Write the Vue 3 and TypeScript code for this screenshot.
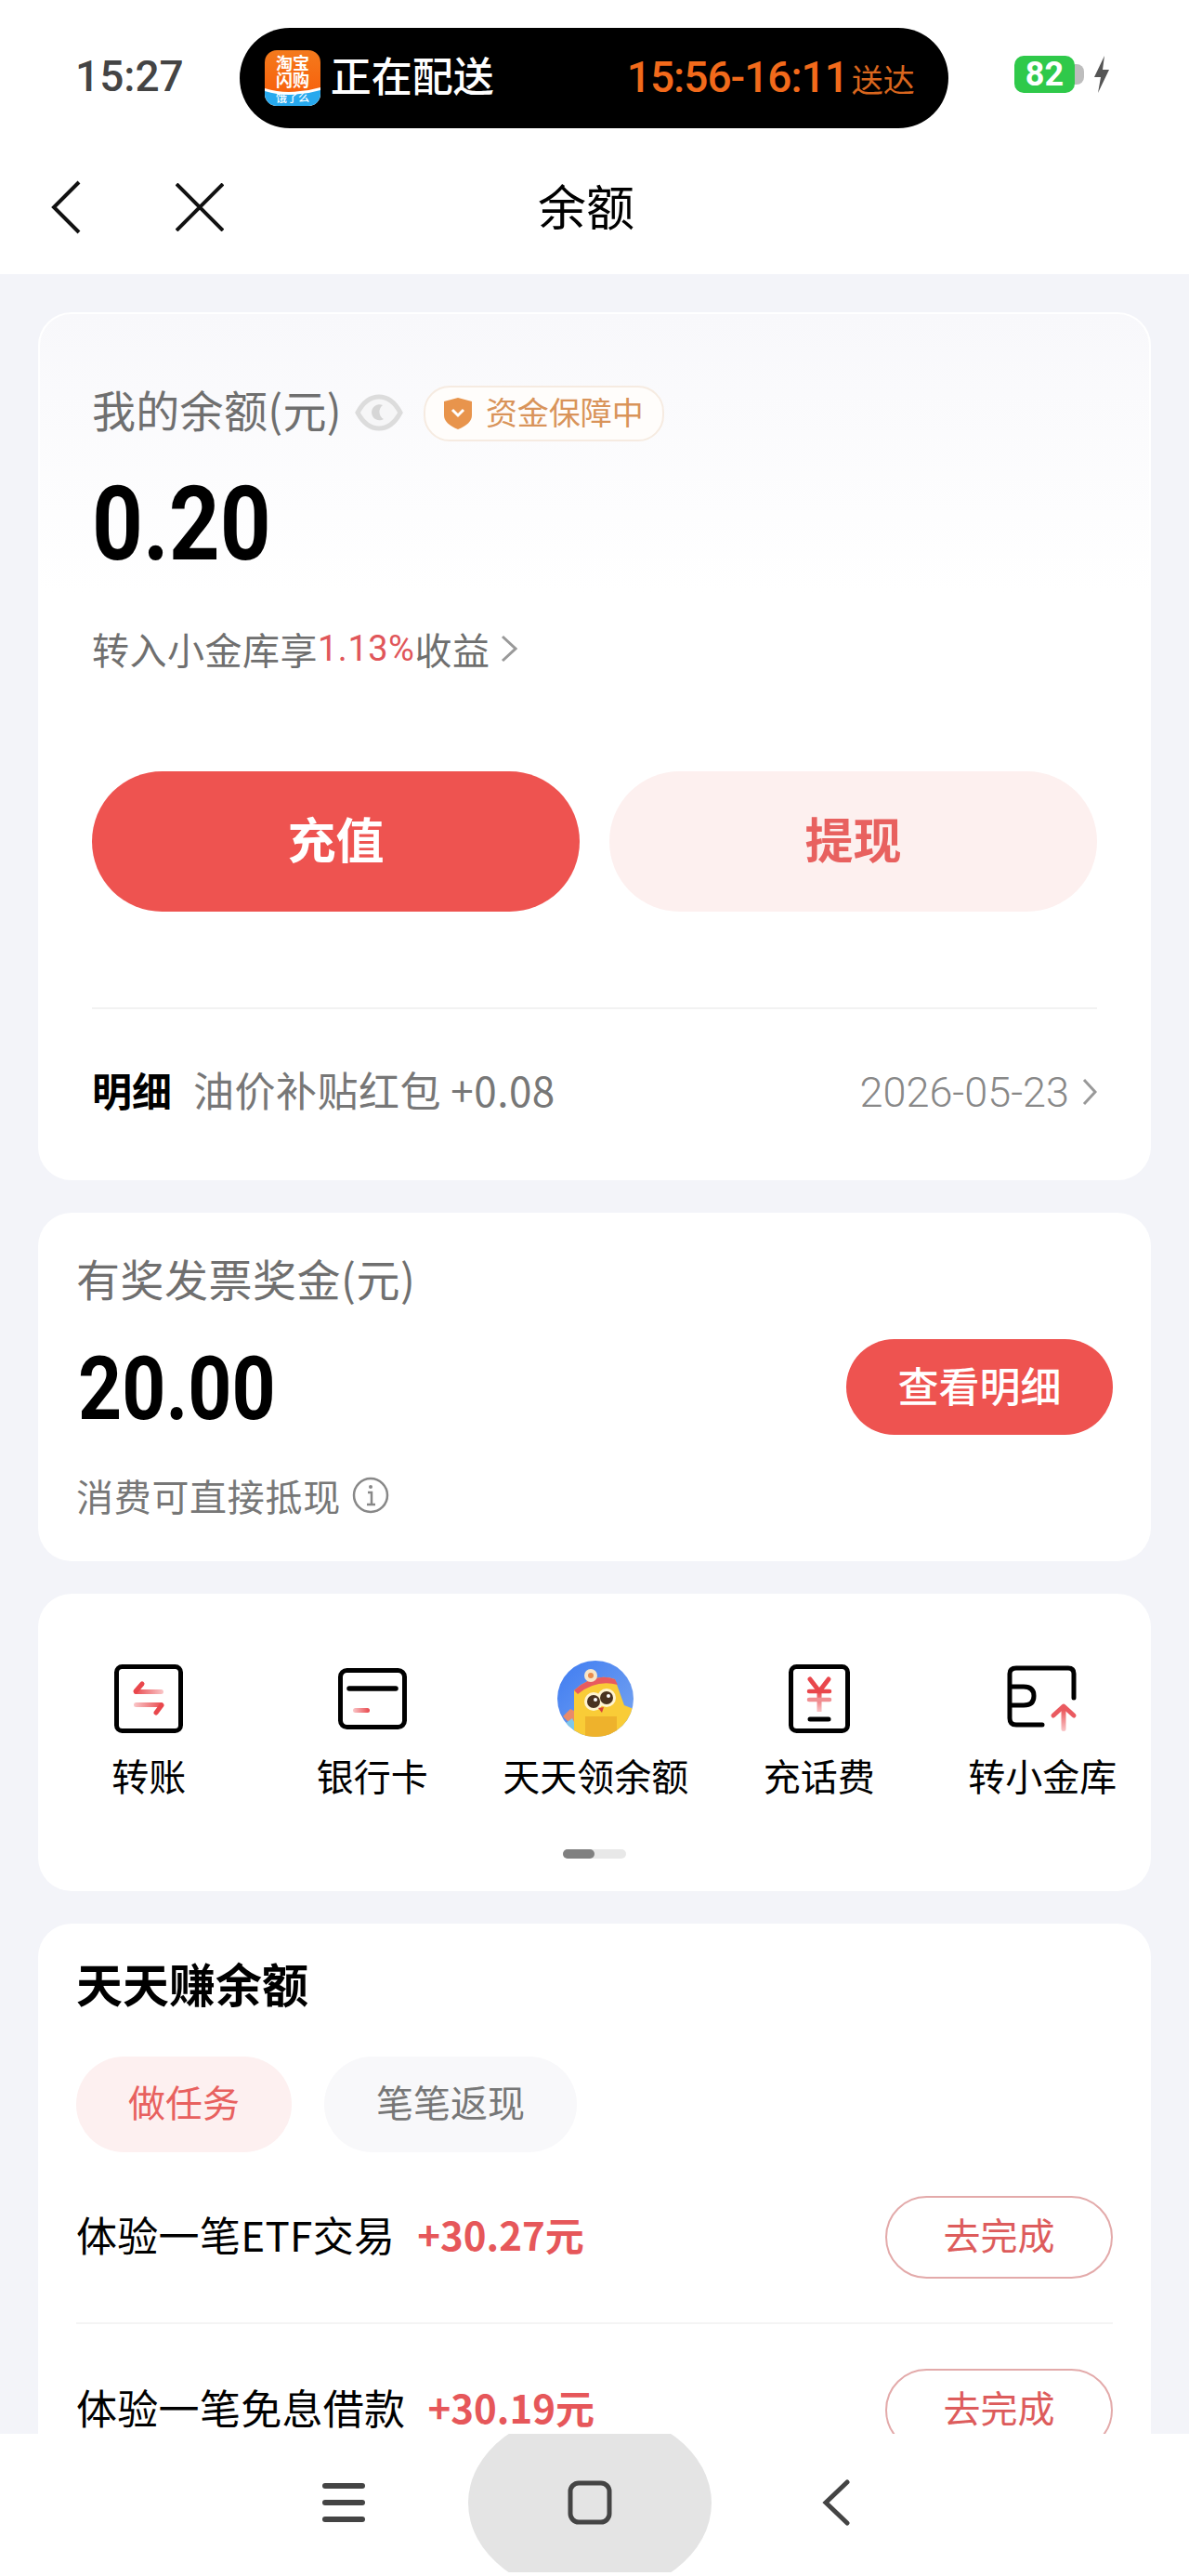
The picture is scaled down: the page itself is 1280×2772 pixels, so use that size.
<script setup lang="ts">
const shortcuts = [
  { key: 'transfer', label: '转账' },
  { key: 'card', label: '银行卡' },
  { key: 'mascot', label: '天天领余额' },
  { key: 'phone', label: '充话费' },
  { key: 'vault', label: '转小金库' },
]

const tasks = [
  { name: '体验一笔ETF交易', reward: '+30.27元' },
  { name: '体验一笔免息借款', reward: '+30.19元' },
]
</script>

<template>
  <div class="page">
    <!-- 状态栏 -->
    <div class="status">
      <span class="clock">15:27</span>
      <div class="island">
        <svg class="app-icon" viewBox="0 0 60 60" width="60" height="60">
          <defs>
            <linearGradient id="appOrange" x1="0" y1="0" x2="0" y2="1">
              <stop offset="0" stop-color="#f47a1c" />
              <stop offset="1" stop-color="#f85a08" />
            </linearGradient>
            <clipPath id="appClip"><rect width="60" height="60" rx="13" /></clipPath>
          </defs>
          <g clip-path="url(#appClip)">
            <rect width="60" height="60" fill="url(#appOrange)" />
            <path d="M0 41 Q20 47 38 44 Q50 43 60 40 V60 H0 Z" fill="#fff" />
            <path d="M0 44 Q20 50 38 47 Q50 46 60 43 V60 H0 Z" fill="#27a9ee" />
            <text x="30" y="21" class="app-t1">淘宝</text>
            <text x="30" y="39" class="app-t1">闪购</text>
            <text x="30" y="56" class="app-t2">饿了么</text>
          </g>
        </svg>
        <span class="island-title">正在配送</span>
        <span class="island-time">15:56-16:11</span>
        <span class="island-note">送达</span>
      </div>
      <div class="battery">
        <div class="battery-body">82</div>
        <div class="battery-tip"></div>
        <svg width="18" height="40" viewBox="0 0 18 40"><path d="M12 0 L1 23 H8 L5 40 L17 15 H10 Z" fill="#555" /></svg>
      </div>
    </div>

    <!-- 导航 -->
    <div class="nav">
      <svg class="nav-back" width="34" height="58" viewBox="0 0 34 58" fill="none" stroke="#111" stroke-width="4">
        <path d="M31 2 L4 29 L31 56" />
      </svg>
      <svg class="nav-close" width="52" height="52" viewBox="0 0 52 52" fill="none" stroke="#111" stroke-width="4">
        <path d="M1 1 L51 51 M51 1 L1 51" />
      </svg>
      <div class="nav-title">余额</div>
    </div>

    <div class="scroll">
      <!-- 余额 -->
      <section class="card balance">
        <div class="balance-head">
          <span class="muted-lg">我的余额(元)</span>
          <svg class="eye" width="52" height="40" viewBox="0 0 52 40" fill="none">
            <path d="M3 20 Q12 3 26 3 Q40 3 49 20 Q40 37 26 37 Q12 37 3 20 Z" fill="#f6f6f7" stroke="#dcdcdc" stroke-width="5" />
            <path d="M30 12 A8.5 8.5 0 1 0 31 27 A9 9 0 0 1 30 12 Z" fill="#d6d6d6" />
          </svg>
          <div class="safe-badge">
            <svg width="30" height="34" viewBox="0 0 30 34">
              <path d="M15 0 L30 4 V19 Q30 28 15 34 Q0 28 0 19 V4 Z" fill="#e8944c" />
              <path d="M9 13 L15 19 L21 13" fill="none" stroke="#fff" stroke-width="3" />
            </svg>
            <span class="safe-text">资金保障中</span>
          </div>
        </div>
        <div class="amount amount-lg">0.20</div>
        <div class="promo">
          转入小金库享<span class="rate">1.13%</span>收益
          <svg class="chev" width="18" height="30" viewBox="0 0 18 30" fill="none" stroke="#999" stroke-width="3"><path d="M2 2 L16 15 L2 28" /></svg>
        </div>
        <div class="actions">
          <div class="btn-main">充值</div>
          <div class="btn-soft">提现</div>
        </div>
        <div class="divider"></div>
        <div class="detail">
          <b class="detail-tag">明细</b>
          <span class="detail-text">油价补贴红包 +0.08</span>
          <span class="detail-date">2026-05-23</span>
          <svg width="16" height="30" viewBox="0 0 16 30" fill="none" stroke="#999" stroke-width="3"><path d="M2 2 L14 15 L2 28" /></svg>
        </div>
      </section>

      <!-- 发票奖金 -->
      <section class="card invoice">
        <div class="invoice-label">有奖发票奖金(元)</div>
        <div class="invoice-row">
          <div class="amount amount-md">20.00</div>
          <div class="btn-detail">查看明细</div>
        </div>
        <div class="invoice-note">
          <span class="note-text">消费可直接抵现</span>
          <svg width="40" height="40" viewBox="0 0 40 40" fill="none">
            <circle cx="20" cy="20" r="18" stroke="#888" stroke-width="2.5" />
            <circle cx="20" cy="11" r="2" fill="#888" />
            <path d="M17 17 H21 V30 M16 30 H25" stroke="#888" stroke-width="2.5" />
          </svg>
        </div>
      </section>

      <!-- 快捷入口 -->
      <section class="card tools">
        <svg width="0" height="0" class="defs">
          <defs>
            <linearGradient id="fadeRight" x1="0" y1="0" x2="1" y2="0">
              <stop offset="0" stop-color="#e9474c" />
              <stop offset="1" stop-color="#f9c6c8" />
            </linearGradient>
            <linearGradient id="fadeLeft" x1="0" y1="0" x2="1" y2="0">
              <stop offset="0" stop-color="#f9c6c8" />
              <stop offset="1" stop-color="#e9474c" />
            </linearGradient>
            <linearGradient id="fadeDown" x1="0" y1="0" x2="0" y2="1">
              <stop offset="0" stop-color="#e9474c" />
              <stop offset="1" stop-color="#f9c6c8" />
            </linearGradient>
          </defs>
        </svg>
        <div class="tool-grid">
          <div v-for="item in shortcuts" :key="item.key" class="tool">
            <div class="tool-icon">
              <svg v-if="item.key === 'transfer'" width="74" height="74" viewBox="0 0 74 74" fill="none">
                <rect x="2.5" y="2.5" width="69" height="69" rx="6" stroke="#000" stroke-width="5" />
                <rect x="21" y="27" width="32" height="5" rx="2.5" fill="url(#fadeRight)" />
                <path d="M23 29 L30 21" stroke="#e9474c" stroke-width="5" stroke-linecap="round" />
                <rect x="21" y="41" width="32" height="5" rx="2.5" fill="url(#fadeLeft)" />
                <path d="M51 44 L45 52" stroke="#e9474c" stroke-width="5" stroke-linecap="round" />
              </svg>
              <svg v-else-if="item.key === 'card'" width="74" height="66" viewBox="0 0 74 66" fill="none">
                <rect x="2.5" y="2.5" width="69" height="61" rx="7" stroke="#000" stroke-width="5" />
                <path d="M12 22 H62" stroke="#000" stroke-width="5.5" stroke-linecap="round" />
                <rect x="16" y="43" width="18" height="5" rx="2.5" fill="url(#fadeLeft)" />
              </svg>
              <svg v-else-if="item.key === 'mascot'" width="82" height="82" viewBox="0 0 82 82">
                <defs>
                  <linearGradient id="mascotSky" x1="0" y1="0" x2="1" y2="1">
                    <stop offset="0" stop-color="#3f7cf2" />
                    <stop offset="1" stop-color="#7aa6ef" />
                  </linearGradient>
                  <clipPath id="mascotClip"><circle cx="41" cy="41" r="41" /></clipPath>
                </defs>
                <g clip-path="url(#mascotClip)">
                  <rect width="82" height="82" fill="url(#mascotSky)" />
                  <path d="M6 60 L14 52 L22 56 L16 70 Z" fill="#e98a6a" />
                  <path d="M8 68 L16 62 L22 74 L14 78 Z" fill="#7fc7ea" />
                  <path d="M18 32 Q40 12 62 20 L72 48 L82 52 V82 H18 Z" fill="#f9cc37" />
                  <path d="M18 32 Q40 12 62 20 L65 26 Q42 20 22 36 Z" fill="#e85b5f" />
                  <circle cx="36" cy="16" r="7" fill="#f7e6c8" />
                  <circle cx="36" cy="16" r="3" fill="#e88a4a" />
                  <path d="M30 60 H64 V82 H30 Z" fill="#eeb22c" />
                  <circle cx="39" cy="44" r="10" fill="#fff4d0" />
                  <circle cx="53" cy="40" r="10" fill="#fff4d0" />
                  <circle cx="39" cy="44" r="7" fill="#4a3320" />
                  <circle cx="53" cy="40" r="7" fill="#4a3320" />
                  <circle cx="41" cy="42" r="2" fill="#fff" />
                  <circle cx="55" cy="38" r="2" fill="#fff" />
                  <path d="M44 51 L50 50 L48 56 Z" fill="#d8413a" />
                </g>
              </svg>
              <svg v-else-if="item.key === 'phone'" width="66" height="74" viewBox="0 0 66 74" fill="none">
                <rect x="2.5" y="2.5" width="61" height="69" rx="6" stroke="#000" stroke-width="5" />
                <path d="M23 16 L33 29 L43 16" stroke="#e9474c" stroke-width="5" stroke-linecap="round" />
                <rect x="30.5" y="29" width="5" height="22" fill="url(#fadeDown)" />
                <path d="M22 29 H44" stroke="#e9474c" stroke-width="4.5" stroke-linecap="round" />
                <path d="M22 38 H44" stroke="#f08f92" stroke-width="4.5" stroke-linecap="round" />
                <path d="M23 59 H43" stroke="#000" stroke-width="5" stroke-linecap="round" />
              </svg>
              <svg v-else width="76" height="72" viewBox="0 0 76 72" fill="none">
                <path d="M38 64 H10 Q3 64 3 57 V9 Q3 3 10 3 H66 Q72 3 72 9 V35" stroke="#000" stroke-width="5" stroke-linecap="round" />
                <path d="M3 23 H18 Q29 23 29 33 Q29 43 18 43 H3" stroke="#000" stroke-width="5" />
                <rect x="58.5" y="44" width="5" height="27" rx="2.5" fill="url(#fadeDown)" />
                <path d="M50 54 L61 44 L72 54" stroke="#ea5a60" stroke-width="5" stroke-linecap="round" stroke-linejoin="round" />
              </svg>
            </div>
            <div class="tool-label">{{ item.label }}</div>
          </div>
        </div>
        <div class="pager"><span></span></div>
      </section>

      <!-- 天天赚余额 -->
      <section class="card earn">
        <div class="earn-title">天天赚余额</div>
        <div class="tabs">
          <div class="tab tab-on">做任务</div>
          <div class="tab">笔笔返现</div>
        </div>
        <div v-for="task in tasks" :key="task.name" class="task">
          <span class="task-name">{{ task.name }}</span>
          <span class="task-reward">{{ task.reward }}</span>
          <div class="task-btn">去完成</div>
        </div>
      </section>
    </div>

    <!-- 系统导航 -->
    <div class="sysbar">
      <svg width="46" height="42" viewBox="0 0 46 42" fill="#444">
        <rect width="46" height="6" y="0" rx="3" /><rect width="46" height="6" y="18" rx="3" /><rect width="46" height="6" y="36" rx="3" />
      </svg>
      <div class="home-pill">
        <svg width="48" height="48" viewBox="0 0 48 48" fill="none" stroke="#444" stroke-width="5"><rect x="3" y="3" width="42" height="42" rx="9" /></svg>
      </div>
      <svg width="30" height="50" viewBox="0 0 30 50" fill="none" stroke="#444" stroke-width="5" stroke-linecap="round"><path d="M27 3 L4 25 L27 47" /></svg>
    </div>
  </div>
</template>

<style scoped>
.page {
  width: 1280px;
  height: 2772px;
  overflow: hidden;
  display: flex;
  flex-direction: column;
  background: #f3f4f9;
  font-family: "Noto Sans CJK SC", "Noto Sans", sans-serif;
  color: #000;
}

/* 状态栏 */
.status {
  height: 167px;
  flex: none;
  background: #fff;
  display: flex;
  align-items: flex-start;
  padding: 30px 85px 0 81px;
  box-sizing: border-box;
}
.clock {
  width: 177px;
  margin-top: 22px;
  font: 500 46px/60px Roboto, sans-serif;
  color: #444;
}
.island {
  width: 764px;
  height: 108px;
  background: #000;
  border-radius: 54px;
  display: flex;
  align-items: center;
  padding-left: 27px;
  box-sizing: border-box;
}
.app-icon {
  flex: none;
}
.app-t1 {
  font: 700 18px "Noto Sans CJK SC", sans-serif;
  fill: #fff;
  text-anchor: middle;
}
.app-t2 {
  font: 500 12px "Noto Sans CJK SC", sans-serif;
  fill: #fff;
  text-anchor: middle;
}
.island-title {
  margin-left: 11px;
  margin-bottom: 8px;
  width: 319px;
  font-size: 44px;
  font-weight: 500;
  color: #fff;
}
.island-time {
  margin-bottom: 2px;
  font: 500 46px Roboto, sans-serif;
  color: #f26a1b;
  letter-spacing: -1px;
}
.island-note {
  margin-left: 4px;
  font-size: 34px;
  color: #d9661e;
}
.battery {
  margin-left: 71px;
  margin-top: 30px;
  display: flex;
  align-items: center;
}
.battery-body {
  width: 65px;
  height: 40px;
  border-radius: 10px;
  background: #2fc94a;
  color: #fff;
  font: 700 36px/40px Roboto, sans-serif;
  text-align: center;
}
.battery-tip {
  width: 10px;
  height: 22px;
  background: #bdbdbd;
  border-radius: 0 8px 8px 0;
  margin-right: 10px;
}

/* 导航 */
.nav {
  height: 128px;
  flex: none;
  box-sizing: border-box;
  padding: 0 0 16px 54px;
  background: #fff;
  display: flex;
  align-items: center;
}
.nav-close {
  margin-left: 101px;
}
.nav-title {
  margin-left: 338px;
  padding-bottom: 6px;
  font-size: 52px;
  font-weight: 400;
}

.scroll {
  flex: 1;
  min-height: 0;
  overflow: hidden;
  padding: 41px 41px 0;
}
.card {
  background: #fff;
  border-radius: 36px;
  margin-bottom: 35px;
}

/* 余额卡片 */
.balance {
  padding: 76px 56px 0;
  background: linear-gradient(#f8f8fb, #fff 300px);
  border: 2px solid #fff;
  box-sizing: border-box;
  height: 934px;
}
.balance-head {
  height: 60px;
  display: flex;
  align-items: center;
}
.muted-lg {
  padding-bottom: 8px;
  font-size: 47px;
  line-height: 60px;
  letter-spacing: 0.3px;
  color: #6f6f6f;
}
.eye {
  margin-left: 14px;
}
.safe-badge {
  margin-left: 22px;
  height: 56px;
  margin-top: 2px;
  padding: 0 20px;
  display: flex;
  align-items: center;
  gap: 15px;
  background: #fffdfb;
  border: 2px solid #f6ebe1;
  border-radius: 28px;
  font-size: 34px;
  color: #d9945a;
}
.safe-text {
  padding-bottom: 6px;
}
.amount {
  font-family: Roboto, sans-serif;
  font-weight: 700;
  color: #000;
  transform-origin: left center;
}
.amount-lg {
  margin-top: 34px;
  font-size: 112px;
  line-height: 112px;
  transform: scaleX(0.855);
}
.promo {
  margin-top: 52px;
  height: 56px;
  box-sizing: border-box;
  padding-bottom: 5px;
  display: flex;
  align-items: center;
  font-size: 40px;
  letter-spacing: 0.5px;
  color: #6f6f6f;
}
.rate {
  color: #e0565a;
  font-family: Roboto, sans-serif;
  font-size: 38px;
}
.chev {
  margin-left: 12px;
}
.actions {
  margin-top: 102px;
  display: grid;
  grid-template-columns: 1fr 1fr;
  gap: 32px;
}
.btn-main,
.btn-soft {
  height: 151px;
  box-sizing: border-box;
  padding-bottom: 8px;
  border-radius: 76px;
  display: flex;
  align-items: center;
  justify-content: center;
  font-size: 52px;
  font-weight: 700;
}
.btn-main {
  background: #ee5350;
  color: #fff;
}
.btn-soft {
  background: #fdf0ef;
  color: #e8615f;
}
.divider {
  margin-top: 103px;
  height: 2px;
  background: #f2f2f2;
}
.detail {
  margin-top: 59px;
  height: 60px;
  box-sizing: border-box;
  display: flex;
  align-items: center;
  font-size: 43px;
}
.detail-tag {
  padding-bottom: 7px;
  font-weight: 700;
}
.detail-text {
  margin-left: 23px;
  padding-bottom: 7px;
  font-size: 44px;
  letter-spacing: 0.5px;
  color: #777;
  flex: 1;
}
.detail-date {
  margin-right: 14px;
  font-family: Roboto, sans-serif;
  font-size: 45px;
  font-weight: 300;
  color: #888;
}

/* 发票奖金 */
.invoice {
  padding: 40px 41px 46px;
}
.invoice-label {
  font-size: 47px;
  line-height: 60px;
  letter-spacing: 0.5px;
  color: #6f6f6f;
}
.invoice-row {
  margin-top: 36px;
  display: flex;
  align-items: center;
  justify-content: space-between;
}
.amount-md {
  font-size: 94px;
  line-height: 97px;
  margin-left: 2px;
  padding-top: 6px;
  transform: scaleX(0.875);
}
.btn-detail {
  width: 287px;
  height: 103px;
  box-sizing: border-box;
  padding-bottom: 6px;
  border-radius: 52px;
  background: #ee5350;
  color: #fff;
  display: flex;
  align-items: center;
  justify-content: center;
  font-size: 44px;
  font-weight: 500;
}
.invoice-note {
  margin-top: 40px;
  height: 50px;
  display: flex;
  align-items: center;
  gap: 12px;
  font-size: 40px;
  color: #777;
}
.note-text {
  letter-spacing: 0.7px;
}

/* 快捷入口 */
.tools {
  padding: 72px 0 35px;
  position: relative;
}
.defs {
  position: absolute;
}
.tool-grid {
  display: grid;
  grid-template-columns: repeat(5, 240.5px);
  margin-left: -1px;
}
.tool {
  display: flex;
  flex-direction: column;
  align-items: center;
}
.tool-icon {
  height: 81px;
  display: flex;
  align-items: center;
  justify-content: center;
}
.tool-label {
  margin-top: 17px;
  font-size: 40px;
  line-height: 50px;
  white-space: nowrap;
}
.pager {
  margin: 55px auto 0;
  width: 68px;
  height: 10px;
  border-radius: 5px;
  background: #e8e8e8;
}
.pager span {
  display: block;
  width: 34px;
  height: 10px;
  border-radius: 5px;
  background: #808080;
}

/* 天天赚余额 */
.earn {
  padding: 33px 41px 0;
  border-radius: 36px 36px 0 0;
  margin-bottom: 0;
}
.earn-title {
  font-size: 50px;
  line-height: 60px;
  font-weight: 700;
}
.tabs {
  margin-top: 50px;
  display: flex;
  gap: 35px;
}
.tab {
  height: 103px;
  box-sizing: border-box;
  padding: 0 56px 8px;
  border-radius: 52px;
  background: #f8f8fa;
  color: #777;
  font-size: 40px;
  display: flex;
  align-items: center;
}
.tab-on {
  background: #fdf0f0;
  color: #e8615f;
}
.task {
  display: flex;
  align-items: center;
  padding: 47px 0;
  border-bottom: 2px solid #f4f4f4;
}
.task + .task {
  padding-top: 48px;
}
.task-name {
  padding-bottom: 8px;
  font-size: 44px;
  letter-spacing: 0.3px;
}
.task-reward {
  margin-left: 24px;
  padding-bottom: 8px;
  flex: 1;
  font-size: 42px;
  font-weight: 700;
  color: #e6575a;
}
.task-btn {
  width: 245px;
  height: 89px;
  box-sizing: border-box;
  padding-bottom: 8px;
  border: 2px solid #e3aaaa;
  border-radius: 45px;
  display: flex;
  align-items: center;
  justify-content: center;
  font-size: 40px;
  color: #dd5c5c;
}

/* 系统导航 */
.sysbar {
  height: 153px;
  flex: none;
  background: #fff;
  display: flex;
  align-items: center;
  padding-left: 347px;
}
.sysbar > svg {
  margin-bottom: 6px;
}
.home-pill {
  margin-left: 111px;
  width: 262px;
  height: 149px;
  margin-top: -4px;
  clip-path: ellipse(131px 100px at center);
  background: #e4e4e4;
  display: flex;
  align-items: center;
  justify-content: center;
}
.home-pill svg {
  margin-bottom: 2px;
}
.sysbar > svg:last-child {
  margin-left: 119px;
}
</style>
